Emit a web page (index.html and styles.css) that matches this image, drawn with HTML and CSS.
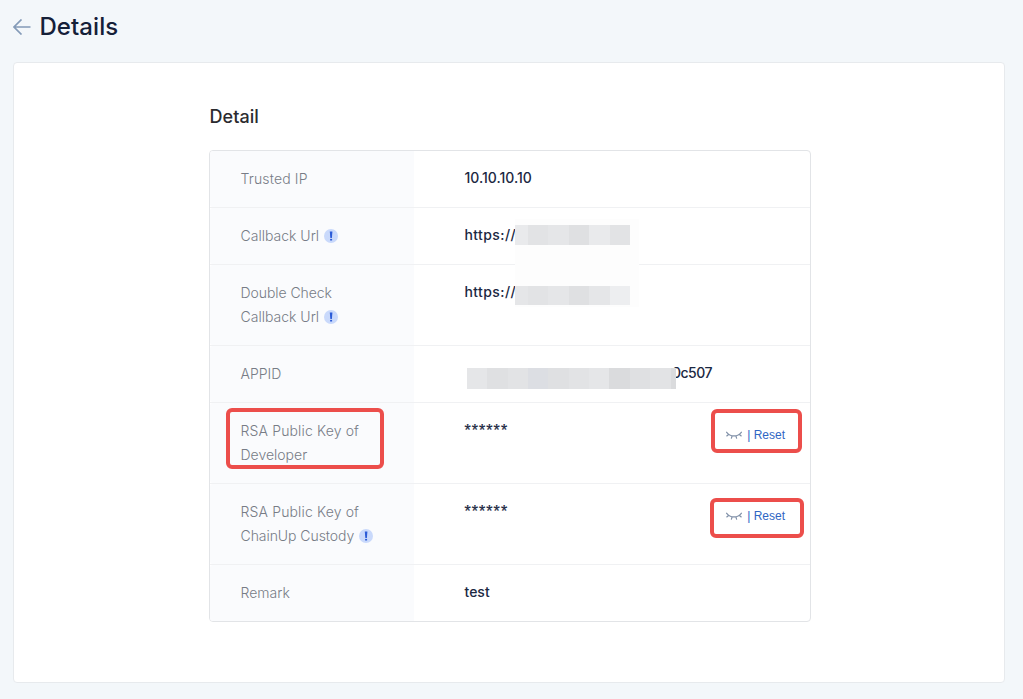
FILE: index.html
```html
<!DOCTYPE html>
<html lang="en">
<head>
<meta charset="utf-8">
<title>Details</title>
<link rel="stylesheet" href="styles.css">
</head>
<body>
<svg width="0" height="0" class="defs">
  <symbol id="info" viewBox="0 0 14 14"><circle cx="7" cy="7" r="7" fill="#c9d9fb"/><path d="M5.800 2.500h2.600L7.900 8.900H6.300z" fill="#2b5bd7"/><path d="M6.100 9.900h2v1.600h-2z" fill="#2b5bd7"/></symbol>
  <symbol id="eye" viewBox="0 0 16 8"><path d="M.3.8C4.200 6.300 11.800 6.300 15.700.8M2.800 3.200.5 5.200M13.200 3.200 15.500 5.200M6.100 4.900 5.300 7.600M9.900 4.900 10.700 7.600" fill="none" stroke="#8090a8" stroke-width="1.200"/></symbol>
</svg>
<header class="page-head">
  <svg class="back" width="18" height="16" viewBox="0 0 18 16"><path d="M17.500 8H1M8.500.5 1 8l7.500 7.500" fill="none" stroke="#849bb8" stroke-width="1.700"/></svg>
  <h1 class="page-title">Details</h1>
</header>
<main class="card">
  <h2 class="section-title">Detail</h2>
  <dl class="table">
    <div class="row"><dt class="label"><span class="wide">Trusted IP</span></dt><dd class="value"><span class="ip">10.10.10.10</span></dd></div>
    <div class="row"><dt class="label">Callback Url<svg class="info"><use href="#info"/></svg></dt><dd class="value"><span class="url">https://</span>
      <span class="veil"></span>
      <span class="mosaic mosaic-url"><i class="w13 a"></i><i class="w20 c"></i><i class="w21 b"></i><i class="w20 d"></i><i class="w21 a"></i><i class="w20 c"></i></span></dd></div>
    <div class="row"><dt class="label"><span class="tight">Double Check</span><br>Callback Url<svg class="info"><use href="#info"/></svg></dt><dd class="value"><span class="url">https://</span>
      <span class="mosaic mosaic-url2"><i class="w13 b"></i><i class="w20 c"></i><i class="w21 b"></i><i class="w20 d"></i><i class="w21 b"></i><i class="w20 e"></i></span></dd></div>
    <div class="row"><dt class="label">APPID</dt><dd class="value"><span class="appid">0c507</span>
      <span class="mosaic mosaic-id"><i class="w20 b"></i><i class="w21 d"></i><i class="w20 c"></i><i class="w20 f"></i><i class="w21 d"></i><i class="w20 c"></i><i class="w20 b"></i><i class="w21 g"></i><i class="w20 d"></i><i class="w21 c"></i><i class="w5 g"></i></span></dd></div>
    <div class="row"><dt class="label"><span class="wide">RSA Public Key of</span><br>Developer<span class="mark mark-label"></span></dt><dd class="value"><span class="stars">******</span>
      <span class="actions"><svg class="eye"><use href="#eye"/></svg><span>| Reset</span></span><span class="mark mark-top"></span></dd></div>
    <div class="row"><dt class="label"><span class="wide">RSA Public Key of</span><br><span class="tight">ChainUp Custody</span><svg class="info"><use href="#info"/></svg></dt><dd class="value"><span class="stars">******</span>
      <span class="actions"><svg class="eye"><use href="#eye"/></svg><span>| Reset</span></span><span class="mark mark-bottom"></span></dd></div>
    <div class="row"><dt class="label">Remark</dt><dd class="value"><span>test</span></dd></div>
  </dl>
</main>
</body>
</html>
```
FILE: styles.css
```css
* { box-sizing: border-box; }
body { margin: 0; background: #f3f7fa; font-family: Inter, "Liberation Sans", sans-serif; }
h1, h2, dl, dd { margin: 0; }
.defs { position: absolute; }
.page-head { display: flex; align-items: center; height: 62px; padding: 0 0 9px 13px; gap: 8.500px; }
.back { flex: none; }
.page-title { font-size: 24px; font-weight: 500; line-height: 32px; color: #152038; letter-spacing: 0.05px; }
.card { width: 992px; height: 621px; margin-left: 13px; padding: 42px 0 0 195px; background: #fff; border: 1px solid #e7eaed; border-radius: 4px; }
.section-title { height: 45px; padding-left: 0.500px; font-size: 18px; font-weight: 500; line-height: 24px; letter-spacing: 0.05px; color: #2b2b2f; }
.table { width: 602px; border: 1px solid #e2e4e7; border-radius: 4px; }
.row { display: flex; border-bottom: 1px solid #f0f1f3; }
.row:last-child { border-bottom: 0; }
.label { position: relative; width: 204px; padding: 16px 0 16px 30.500px; background: #fafbfd; border-radius: 3px 0 0 3px; font-size: 14px; font-weight: 300; line-height: 24px; color: #777c86; white-space: nowrap; }
.tight { letter-spacing: -0.06px; }
.wide { letter-spacing: 0.15px; }
.info { width: 14px; height: 14px; margin-left: 5px; vertical-align: -2px; }
.value { position: relative; display: flex; flex: 1; padding: 15px 25px 0 50.500px; font-size: 14px; font-weight: 500; line-height: 24px; color: #1b2842; }
.url { letter-spacing: 0.4px; }
.stars { padding-top: 1px; font-family: "Liberation Sans", sans-serif; font-size: 16px; letter-spacing: 1.050px; -webkit-text-stroke: 0.25px #1b2842; }
.actions { display: flex; align-items: center; height: 24px; margin: 5px 0 0 auto; gap: 5px; font: 12px/24px "Liberation Sans", sans-serif; color: #2f66c4; }
.eye { width: 16px; height: 8px; }
.appid { margin-left: 207.500px; letter-spacing: -0.5px; }
.mark { position: absolute; z-index: 2; border: 4px solid #ec4e4b; border-radius: 6px; }
.mark-label { left: 16px; top: 5px; width: 158px; height: 61px; }
.mark-top { left: 297px; top: 6px; width: 91px; height: 44px; }
.mark-bottom { left: 296px; top: 14px; width: 94px; height: 40px; }
.veil { position: absolute; z-index: 1; left: 101px; top: 11px; width: 124px; height: 88px; background: #fdfdfd; }
.mosaic { position: absolute; z-index: 2; display: flex; }
.mosaic-url { left: 101px; top: 17px; height: 20px; }
.mosaic-url2 { left: 101px; top: 21px; height: 19px; }
.mosaic-id { left: 53px; top: 22px; height: 21px; }
.w5 { width: 5px; }
.w13 { width: 13px; }
.w20 { width: 20px; }
.w21 { width: 21px; }
.a { background: #e9eaec; }
.b { background: #e5e6e8; }
.c { background: #e2e3e5; }
.d { background: #dfe0e2; }
.e { background: #edeef0; }
.f { background: #dcdee3; }
.g { background: #dadbdd; }
```
